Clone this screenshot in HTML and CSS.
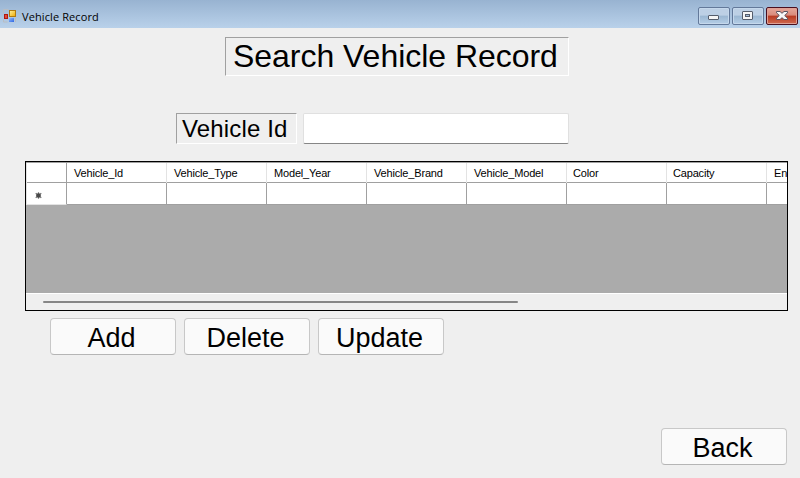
FILE: index.html
```html
<!DOCTYPE html>
<html lang="en">
<head>
<meta charset="utf-8">
<title>Vehicle Record</title>
<link rel="stylesheet" href="styles.css">
</head>
<body>
<header class="titlebar">
  <svg class="app-icon" width="14" height="14" viewBox="0 0 14 14">
    <defs>
      <linearGradient id="gold" x2="1" y2="1"><stop stop-color="#fff3a0"/><stop offset="1" stop-color="#efa800"/></linearGradient>
      <linearGradient id="blue" x2="1" y2="1"><stop stop-color="#8fb9ff"/><stop offset="1" stop-color="#2f66e0"/></linearGradient>
    </defs>
    <path d="M.5 4.500V.5h5M.5 10.500v2.500h4" fill="none" stroke="#b9bdc2"/>
    <rect x="6.500" y="1.500" width="6" height="6" fill="url(#gold)" stroke="#b07a10"/>
    <rect x="1.500" y="5.500" width="3" height="4" fill="#e04a3a" stroke="#b01810"/>
    <rect x="6" y="9" width="5" height="4" fill="url(#blue)"/>
    <path d="M12.500 9v4" stroke="#b9bdc2"/>
  </svg>
  <span class="caption">Vehicle Record</span>
  <div class="controls">
    <div class="control">
      <svg width="30" height="16" viewBox="0 0 30 16"><rect x="9.500" y="7.500" width="10" height="4" rx=".5" fill="#f5f5f5" stroke="#555d6b"/></svg>
    </div>
    <div class="control">
      <svg width="30" height="16" viewBox="0 0 30 16"><rect x="9.500" y="3.500" width="10" height="8" rx=".5" fill="#f5f5f5" stroke="#555d6b"/><rect x="12.500" y="6.500" width="4" height="2" fill="#a3bedb" stroke="#555d6b"/></svg>
    </div>
    <div class="control close">
      <svg width="30" height="16" viewBox="0 0 30 16"><path d="M9.500 3.500h3.500l2 1.800 2-1.800h3.500v1.300l-2.800 2.700 2.800 2.700v1.300h-3.500l-2-1.800-2 1.800h-3.500v-1.300l2.800-2.700-2.800-2.700z" fill="#f7f7f7" stroke="#5a5360"/></svg>
    </div>
  </div>
</header>
<main class="form">
  <h1 class="sunken heading">Search Vehicle Record</h1>
  <div class="search-row">
    <label class="sunken field-label" for="vehicle-id">Vehicle Id</label>
    <input class="field" id="vehicle-id" type="text">
  </div>
  <section class="grid-view">
    <div class="row head">
      <div class="cell selector"></div>
      <div class="cell">Vehicle_Id</div>
      <div class="cell">Vehicle_Type</div>
      <div class="cell">Model_Year</div>
      <div class="cell">Vehicle_Brand</div>
      <div class="cell">Vehicle_Model</div>
      <div class="cell nudge">Color</div>
      <div class="cell nudge">Capacity</div>
      <div class="cell">En</div>
    </div>
    <div class="row new">
      <div class="cell selector"><svg width="7" height="7" viewBox="0 0 7 7"><path d="M3.500 .3v6.400M.7 1.300l5.600 4.400M.7 5.700l5.600-4.400" stroke="#777" stroke-width="1.200"/><circle cx="3.500" cy="3.500" r="2.300" fill="#484848"/></svg></div>
      <div class="cell"></div>
      <div class="cell"></div>
      <div class="cell"></div>
      <div class="cell"></div>
      <div class="cell"></div>
      <div class="cell"></div>
      <div class="cell"></div>
      <div class="cell"></div>
    </div>
    <div class="scrollbar"><div class="thumb"></div></div>
  </section>
  <div class="actions">
    <button class="button">Add</button>
    <button class="button">Delete</button>
    <button class="button">Update</button>
  </div>
  <button class="button back">Back</button>
</main>
</body>
</html>
```
FILE: styles.css
```css
* {
  box-sizing: border-box;
}

body {
  margin: 0;
  width: 800px;
  height: 478px;
  overflow: hidden;
  display: flex;
  flex-direction: column;
  background: #efefef;
  color: #000;
  font-family: "Liberation Sans", Arial, sans-serif;
}

.titlebar {
  flex: none;
  height: 28px;
  padding: 0 2px 0 3px;
  display: flex;
  align-items: flex-start;
  background: linear-gradient(#98b3d1, #b9d1ea);
}

.app-icon {
  margin-top: 9px;
}

.caption {
  margin: 9px 0 0 5px;
  font: 11px/16px "Open Sans", sans-serif;
  letter-spacing: 0.1px;
}

.controls {
  display: flex;
  gap: 2px;
  margin: 7px 0 0 auto;
}

.control {
  width: 32px;
  height: 18px;
  border: 1px solid #63799a;
  border-radius: 2px;
  box-shadow: inset 0 0 0 1px #c5d8ec;
  background: linear-gradient(#bdd0e5 0 45%, #9bb7d2 50%, #b5cee7);
}

.control svg {
  display: block;
}

.control.close {
  border-color: #4a1020;
  box-shadow: inset 0 0 0 1px #dfa095;
  background: linear-gradient(#e5a79b 0, #d98b7b 45%, #b83a22 50%, #cf6a50);
}

.form {
  flex: 1;
  display: flex;
  flex-direction: column;
  padding: 9px 12px 13px 25px;
}

.sunken {
  margin: 0;
  border: 1px solid;
  border-color: #a0a0a0 #fff #fff #a0a0a0;
  font-weight: 400;
  white-space: nowrap;
}

.heading {
  width: 344px;
  height: 39px;
  margin-left: 200px;
  padding-left: 7px;
  font-size: 32px;
  line-height: 37px;
  letter-spacing: -0.03px;
}

.search-row {
  display: flex;
  gap: 6px;
  margin: 37px 0 0 151px;
}

.field-label {
  width: 121px;
  height: 31px;
  padding-left: 5px;
  font-size: 24px;
  line-height: 30px;
  letter-spacing: 0.15px;
}

.field {
  width: 266px;
  height: 31px;
  border: 1px solid #e0e0e0;
  border-bottom-color: #868686;
  border-radius: 2px;
  outline: none;
  background: #fff;
  font: 24px "Liberation Sans", Arial, sans-serif;
}

.grid-view {
  width: 763px;
  height: 150px;
  margin-top: 17px;
  border: 1px solid #000;
  display: flex;
  flex-direction: column;
  overflow: hidden;
  background: #ababab;
}

.row {
  flex: none;
  display: grid;
  grid-template-columns: 41px repeat(8, 100px);
  background: #fff;
}

.head {
  height: 21px;
  border-top: 1px solid #a0a0a0;
  border-bottom: 1px solid #a0a0a0;
}

.new {
  height: 22px;
}

.cell {
  border-right: 1px solid #a0a0a0;
  border-bottom: 1px solid #a0a0a0;
}

.head .cell {
  border-bottom: 0;
  border-right-color: #e3e3e3;
  padding-left: 7px;
  font-size: 11px;
  line-height: 20px;
  letter-spacing: -0.17px;
}

.head .nudge {
  padding-left: 6px;
}

.cell.selector {
  border-left: 1px solid #e3e3e3;
}

.head .cell.selector {
  border-right-color: #a0a0a0;
}

.new .selector {
  border-bottom-color: #e3e3e3;
  padding: 9px 0 0 8px;
}

.new .selector svg {
  display: block;
}

.scrollbar {
  height: 17px;
  margin-top: auto;
  padding: 7px 0 0 17px;
  border-top: 1px solid #fff;
  background: #efefef;
}

.thumb {
  width: 475px;
  height: 2px;
  border-radius: 1px;
  background: #868686;
}

.actions {
  display: flex;
  gap: 8px;
  margin: 7px 0 0 25px;
}

.button {
  width: 126px;
  height: 37px;
  padding: 2px 3px 0 0;
  border: 1px solid #c8c8c8;
  border-bottom-color: #b5b5b5;
  border-radius: 4px;
  background: #fafafa;
  color: #000;
  font: 27px/34px "Liberation Sans", Arial, sans-serif;
  text-align: center;
}

.back {
  margin: auto 1px 0 auto;
}
```
